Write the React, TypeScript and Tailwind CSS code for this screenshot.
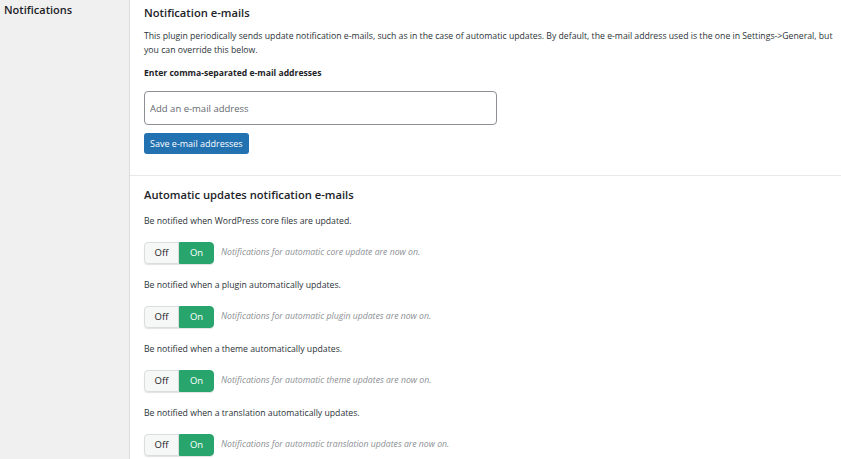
import { useState } from "react";

type Row = { label: string; note: string };

const rows: Row[] = [
  {
    label: "Be notified when WordPress core files are updated.",
    note: "Notifications for automatic core update are now on.",
  },
  {
    label: "Be notified when a plugin automatically updates.",
    note: "Notifications for automatic plugin updates are now on.",
  },
  {
    label: "Be notified when a theme automatically updates.",
    note: "Notifications for automatic theme updates are now on.",
  },
  {
    label: "Be notified when a translation automatically updates.",
    note: "Notifications for automatic translation updates are now on.",
  },
];

function Toggle() {
  const [on, setOn] = useState(true);
  return (
    <div className="flex h-[22px] w-[70px] rounded-[4px] shadow-[0_1px_1px_rgba(0,0,0,0.12)]">
      <button
        onClick={() => setOn(false)}
        className={`flex-1 rounded-l-[4px] border text-[9.5px] ${
          on
            ? "border-[#dcdcde] bg-[#f6f7f7] text-[#1d2327]"
            : "border-[#2271b1] bg-[#2271b1] text-white"
        }`}
      >
        Off
      </button>
      <button
        onClick={() => setOn(true)}
        className={`flex-1 rounded-r-[4px] border text-[9.5px] ${
          on
            ? "border-[#27a56d] bg-[#27a56d] text-white"
            : "border-[#dcdcde] bg-[#f6f7f7] text-[#1d2327]"
        }`}
      >
        On
      </button>
    </div>
  );
}

export default function App() {
  return (
    <div
      className="flex h-[459px] w-full overflow-hidden bg-white text-[#1d2327]"
      style={{ fontFamily: '"Open Sans", "Noto Sans", sans-serif' }}
    >
      <aside className="w-[130px] shrink-0 border-r border-[#dcdcde] bg-[#f0f0f1] pl-[4px] pt-[2px]">
        <h1 className="text-[11px] font-semibold leading-[16px]">Notifications</h1>
      </aside>

      <main className="flex-1">
        <section className="border-b border-[#e8e8e8] pl-[14px] pr-[8px] pb-[21px] pt-[5px]">
          <h2 className="text-[11.2px] font-semibold leading-[16px]">Notification e-mails</h2>
          <p className="mt-[8px] text-[8.7px] leading-[14px] text-[#2c3338]">
            This plugin periodically sends update notification e-mails, such as in the case of
            automatic updates. By default, the e-mail address used is the one in
            Settings-&gt;General, but you can override this below.
          </p>
          <label className="mt-[9px] block text-[8.6px] font-bold leading-[14px]">
            Enter comma-separated e-mail addresses
          </label>
          <input
            type="text"
            placeholder="Add an e-mail address"
            className="mt-[11px] block h-[34px] w-[353px] rounded-[4px] border border-[#8c8f94] px-[5px] text-[9.5px] placeholder:text-[#646970] outline-none"
          />
          <button className="mt-[8px] block h-[21px] rounded-[3px] bg-[#2271b1] px-[6px] text-[9px] text-white">
            Save e-mail addresses
          </button>
        </section>

        <section className="pl-[14px] pt-[11px]">
          <h2 className="text-[11.2px] font-semibold leading-[16px]">
            Automatic updates notification e-mails
          </h2>
          {rows.map((r, i) => (
            <div key={i} className={i === 0 ? "mt-[11px]" : "mt-[14px]"}>
              <p className="text-[8.7px] leading-[14px] text-[#2c3338]">{r.label}</p>
              <div className="mt-[14px] flex items-center gap-[7px]">
                <Toggle />
                <span className="text-[8.7px] italic text-[#8c8f94]">{r.note}</span>
              </div>
            </div>
          ))}
        </section>
      </main>
    </div>
  );
}
